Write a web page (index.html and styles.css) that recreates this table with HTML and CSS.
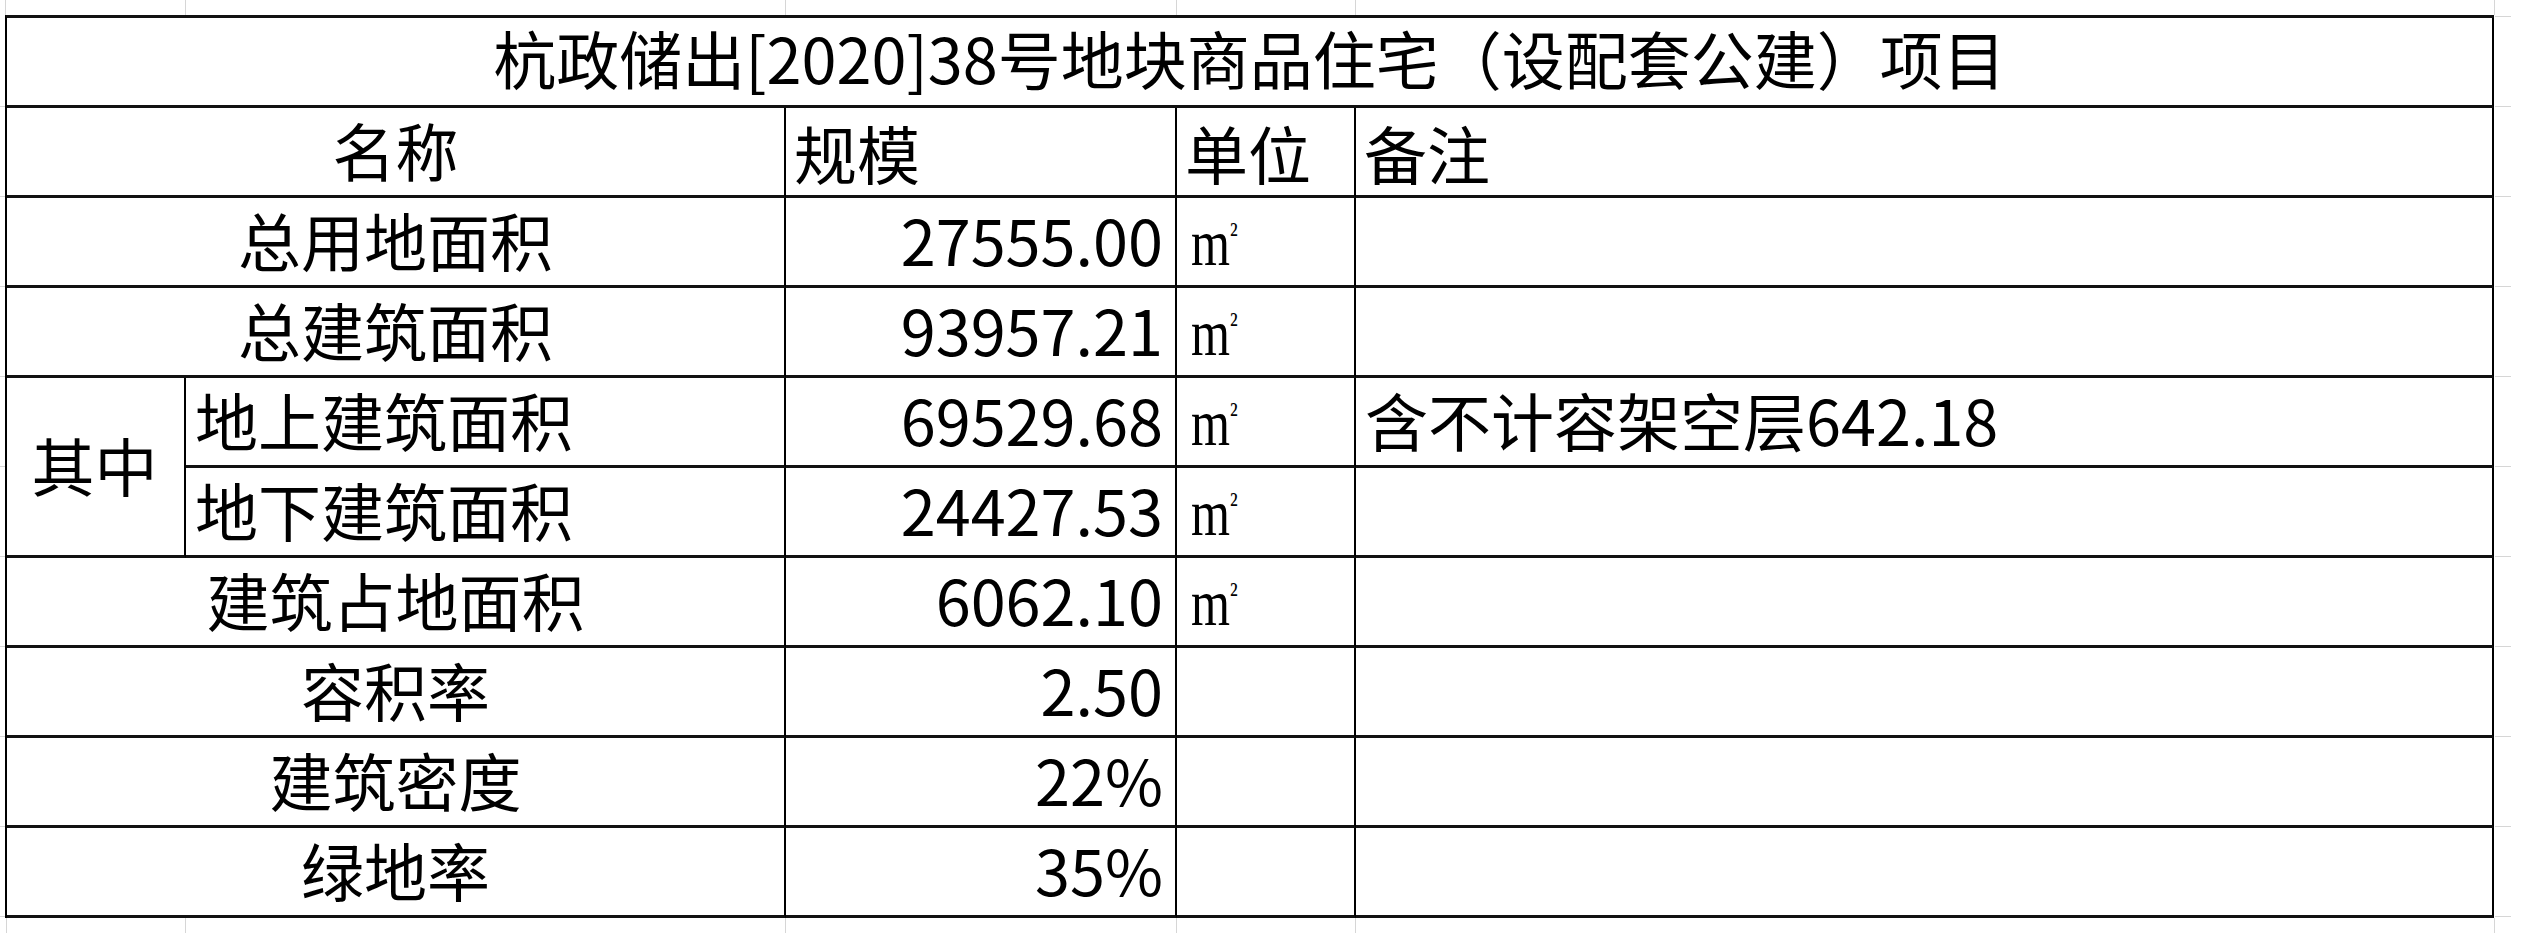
FILE: index.html
```html
<!DOCTYPE html>
<html lang="zh-CN">
<head>
<meta charset="utf-8">
<title>杭政储出[2020]38号地块</title>
<link rel="stylesheet" href="styles.css">
</head>
<body>
<div class="sheet">
  <div class="table">
    <div class="cell title span-all center">杭政储出[2020]38号地块商品住宅（设配套公建）项目</div>

    <div class="cell span-name center">名称</div>
    <div class="cell head">规模</div>
    <div class="cell head">单位</div>
    <div class="cell head">备注</div>

    <div class="cell span-name center">总用地面积</div>
    <div class="cell num">27555.00</div>
    <div class="cell unit"><span class="m">m</span><span class="sq">²</span></div>
    <div class="cell note"></div>

    <div class="cell span-name center">总建筑面积</div>
    <div class="cell num">93957.21</div>
    <div class="cell unit"><span class="m">m</span><span class="sq">²</span></div>
    <div class="cell note"></div>

    <div class="cell among center">其中</div>
    <div class="cell sub">地上建筑面积</div>
    <div class="cell num">69529.68</div>
    <div class="cell unit"><span class="m">m</span><span class="sq">²</span></div>
    <div class="cell note">含不计容架空层642.18</div>

    <div class="cell sub">地下建筑面积</div>
    <div class="cell num">24427.53</div>
    <div class="cell unit"><span class="m">m</span><span class="sq">²</span></div>
    <div class="cell note"></div>

    <div class="cell span-name center">建筑占地面积</div>
    <div class="cell num">6062.10</div>
    <div class="cell unit"><span class="m">m</span><span class="sq">²</span></div>
    <div class="cell note"></div>

    <div class="cell span-name center">容积率</div>
    <div class="cell num">2.50</div>
    <div class="cell unit"></div>
    <div class="cell note"></div>

    <div class="cell span-name center">建筑密度</div>
    <div class="cell num">22%</div>
    <div class="cell unit"></div>
    <div class="cell note"></div>

    <div class="cell span-name center">绿地率</div>
    <div class="cell num">35%</div>
    <div class="cell unit"></div>
    <div class="cell note"></div>
  </div>
</div>
</body>
</html>
```

FILE: styles.css
```css
html, body {
  margin: 0;
  padding: 0;
  background: #ffffff;
}

body {
  width: 2521px;
  height: 949px;
  overflow: hidden;
  font-family: "Noto Sans CJK SC", "Noto Sans", sans-serif;
  color: #000000;
}

.sheet {
  padding: 15px 0 0 5px;
  height: 949px;
  box-sizing: border-box;
  background:
    linear-gradient(#d6d6d6, #d6d6d6) 5px 0 / 1px 15px no-repeat,
    linear-gradient(#d6d6d6, #d6d6d6) 185px 0 / 1px 15px no-repeat,
    linear-gradient(#d6d6d6, #d6d6d6) 785px 0 / 1px 15px no-repeat,
    linear-gradient(#d6d6d6, #d6d6d6) 1176px 0 / 1px 15px no-repeat,
    linear-gradient(#d6d6d6, #d6d6d6) 1355px 0 / 1px 15px no-repeat,
    linear-gradient(#d6d6d6, #d6d6d6) 2494px 0 / 1px 15px no-repeat,
    linear-gradient(#d6d6d6, #d6d6d6) 6px 918px / 1px 15px no-repeat,
    linear-gradient(#d6d6d6, #d6d6d6) 185px 918px / 1px 15px no-repeat,
    linear-gradient(#d6d6d6, #d6d6d6) 785px 918px / 1px 15px no-repeat,
    linear-gradient(#d6d6d6, #d6d6d6) 1176px 918px / 1px 15px no-repeat,
    linear-gradient(#d6d6d6, #d6d6d6) 1355px 918px / 1px 15px no-repeat,
    linear-gradient(#d6d6d6, #d6d6d6) 2494px 918px / 1px 15px no-repeat,
    repeating-linear-gradient(to bottom, #d6d6d6 0 1px, transparent 1px 90px) 0 106px / 5px 811px no-repeat,
    repeating-linear-gradient(to bottom, #d6d6d6 0 1px, transparent 1px 90px) 2495px 16px / 16px 901px no-repeat,
    #ffffff;
}

.table {
  display: grid;
  grid-template-columns: 179px 600px 391px 179px 1138px;
  grid-auto-rows: 90px;
  width: max-content;
  border-left: 2px solid #000000;
  border-top: 3px solid #111111;
}

.cell {
  box-sizing: border-box;
  border-right: 2px solid #000000;
  border-bottom: 3px solid #111111;
  display: flex;
  align-items: center;
  font-size: 63px;
  line-height: 1;
  white-space: nowrap;
  padding: 0 8px;
  padding-bottom: 6px;
}

.center {
  justify-content: center;
}

.span-all {
  grid-column: 1 / -1;
}

.span-name {
  grid-column: 1 / 3;
}

.title {
  padding-bottom: 10px;
}

.head {
  padding-bottom: 0;
}

.among {
  grid-row: span 2;
  padding-left: 6px;
}

.sub {
  padding-left: 9px;
}

.num {
  justify-content: flex-end;
  padding-right: 12px;
}

.unit {
  padding-left: 14px;
  align-items: flex-start;
  padding-top: 12px;
}

.unit .m {
  display: inline-block;
  font-family: "Liberation Serif", "DejaVu Serif", serif;
  font-size: 66px;
  line-height: 1;
  transform: scaleX(0.76);
  transform-origin: left center;
  width: 39px;
}

.unit .sq {
  font-family: "Liberation Serif", "DejaVu Serif", serif;
  font-size: 32px;
  line-height: 1;
  margin-left: 0;
  margin-top: 8px;
  transform: scaleX(0.8);
  transform-origin: left center;
}

.note {
  padding-left: 9px;
}
```
